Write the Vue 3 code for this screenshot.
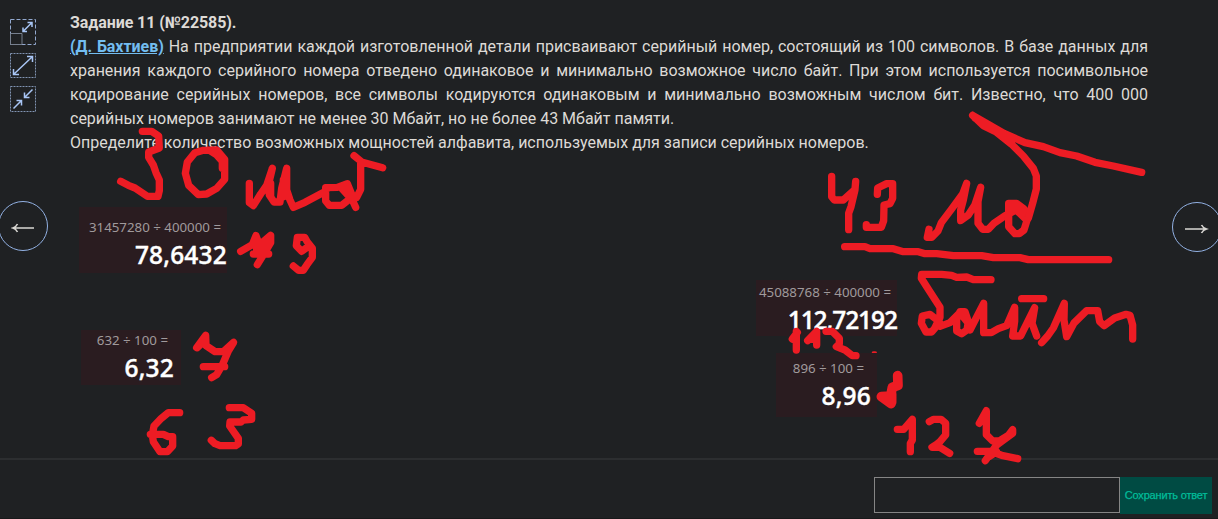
<script setup>
const calcs = [
  { id: 'a', expr: '31457280 ÷ 400000 =', value: '78,6432' },
  { id: 'b', expr: '632 ÷ 100 =', value: '6,32' },
  { id: 'c', expr: '45088768 ÷ 400000 =', value: '112,72192' },
  { id: 'd', expr: '896 ÷ 100 =', value: '8,96' },
]
</script>

<template>
  <div class="page">
    <main class="main">
      <aside class="tools">
        <svg width="26" height="26" viewBox="0 0 26 26">
          <rect class="dash big" x=".5" y=".5" width="25" height="25" />
          <path class="dim" d="M.5 14.5H12V25.5H.5Z" />
          <path class="line" d="M13.5 12 21.5 4M17.5 3.5H22V8M13 8.5V12.5H17" />
        </svg>
        <svg width="26" height="25" viewBox="0 0 26 25">
          <rect class="dash" x=".5" y=".5" width="25" height="24" />
          <path class="line" d="M4 21 22 4M17 3.5H22.5V9M3.5 16V21.5H9" />
        </svg>
        <svg width="26" height="26" viewBox="0 0 26 26">
          <rect class="dash" x=".5" y=".5" width="25" height="25" />
          <path class="line" d="M3.5 22.5 11 15M6.5 14.5H11.5V19.5M22.5 3.5 15 11M14.5 6.5V11.5H19.5" />
        </svg>
      </aside>
      <article class="task">
        <h1>Задание 11 (№22585).</h1>
        <p><a>(Д. Бахтиев)</a> На предприятии каждой изготовленной детали присваивают серийный номер, состоящий из 100 символов. В базе данных для хранения каждого серийного номера отведено одинаковое и минимально возможное число байт. При этом используется посимвольное кодирование серийных номеров, все символы кодируются одинаковым и минимально возможным числом бит. Известно, что 400 000 серийных номеров занимают не менее 30 Мбайт, но не более 43 Мбайт памяти.</p>
        <p>Определите количество возможных мощностей алфавита, используемых для записи серийных номеров.</p>
      </article>
    </main>

    <footer class="answer">
      <input class="field" type="text" />
      <button class="save">Сохранить ответ</button>
    </footer>

    <button class="nav prev">
      <svg width="24" height="12" viewBox="0 0 24 12"><path d="M2 6H23M6.500 2Q5 5 2 6Q5 7 6.500 10" /></svg>
    </button>
    <button class="nav next">
      <svg width="24" height="12" viewBox="0 0 24 12"><path d="M0 6H21M16.500 2Q18 5 21.500 6Q18 7 16.500 10" /></svg>
    </button>

    <div v-for="c in calcs" :key="c.id" class="calc" :class="c.id">
      <span class="expr">{{ c.expr }}</span>
      <strong>{{ c.value }}</strong>
    </div>

    <svg class="ink" width="1218" height="519" viewBox="0 0 1218 519">
      <g transform="translate(0 120) scale(.33333)">
        <path d="M427 34H455L476 48 478 84 446 96 446 112 460 135 468 158 478 180V212L474 229H442L405 204 385 196 362 184" />
        <path d="M610 91 585 98 562 126 556 160 566 196 595 224 620 222 650 205 674 178V118L650 90ZM640 94 667 124V145M630 92 662 112" />
        <path d="M748 190V248L760 257 782 222 800 196 817 145 806 192 808 225 822 246 840 246 845 205 860 145 860 210 870 240 880 262 915 247 977 214M977 203V243L988 256H1025L1058 230 1042 191 1012 202 978 203M1025 205 1057 240 1067 262M1070 232 1082 208V123L1062 107M1082 125 1148 143M812 190V230M850 180V230" />
        <path d="M722 394 757 374 768 347 778 375 812 346 812 368 790 405 772 434M760 402H806M765 378 795 398M775 388 800 362M770 380V395" />
        <path d="M922 382 905 394 889 377 892 352H914L922 366 937 385V412L921 434 910 451H896L880 438" />
      </g>
      <g transform="translate(60 300) scale(.33333)">
        <path d="M410 143 427 120 437 106 438 137 465 155H490L521 127 505 153 487 195 470 224 455 233M430 200H494M412 143 437 119" />
        <path d="M359 338H325L304 355 282 378 277 405 280 425 300 455H322L338 438V410H325L310 403H271" />
        <path d="M508 323H550L575 340V358L550 360 543 366 510 366 509 378 535 415V432L527 437H480L465 431 454 421" />
      </g>
      <g transform="translate(740 100) scale(.33333)">
        <path d="M275 229V290L283 300H310L345 268 347 244M345 270 333 320 326 340V389" />
        <path d="M412 283 413 264 440 251H458V295L450 311 432 315 431 362 424 382H379L379 374" />
        <path d="M567 388 562 412H575L594 393 604 368 634 328 668 282 680 250 670 300 662 330V362L685 345 704 316 722 262 714 305V370L728 388H745L762 370 795 347 828 330" />
        <path d="M806 340V310H830L850 325 866 345 852 390 838 401H825L806 380V320ZM824 325 855 355" />
        <path d="M698 46 730 77 767 95 814 132 850 168 880 205 889 228V267L878 310 865 355M698 46 740 70 792 100 855 128 910 140 960 158 1010 168 1065 187 1120 198 1205 217M706 55 820 118" />
        <path d="M314 440H375L390 446H460L490 455H535L555 461H590L640 467H725L760 473H840L865 479H1106" />
      </g>
      <g transform="translate(740 260) scale(.33333)">
        <path d="M753 59H700L680 51 650 52 635 46 605 43H545L544 55 565 88 600 142V172L584 205 575 216H558L544 190 547 168 570 163 598 185 600 199 630 188 660 158M660 155H675L685 185 681 210 665 221 650 213V178ZM665 165 685 190 690 210 731 130V218H754L775 206 800 197 824 142 824 184 818 228H842L884 143 876 190 890 228" />
        <path d="M845 116H911M905 248 923 228 940 204 973 130 972 180 980 230 1002 189 1040 152H1073L1079 185 1092 197 1124 174 1158 163 1170 166 1178 195V237" />
        <path d="M169 214V270M157 237 172 217M203 242 230 214V255M210 238H228M258 214H277L298 235V252L289 260 315 270 337 287H348" />
        <path stroke-width="12" d="M401 279H405" clip-path="url(#dot)" />
        <path class="bold" d="M473 347 474 376 457 382 452 408 424 410 453 431M455 402V427" />
        <path d="M472 508H491L517 478V540L511 550V575" />
        <path d="M568 485 580 478H603L617 490V525L600 545 590 553 576 562H600L629 580" />
        <path d="M718 490 739 452V524L758 543H777L806 525 818 509V520L770 555 736 602M712 574H750L785 586 833 596M747 590 770 575" />
      </g>
      <defs><clipPath id="dot"><rect x="390" y="274" width="25" height="5" /></clipPath></defs>
    </svg>
  </div>
</template>

<style>
body { margin: 0; background: #1f2123; }
</style>

<style scoped>
.page { position: relative; width: 1218px; height: 519px; overflow: hidden; background: #1f2123; display: flex; flex-direction: column; font-family: Roboto, sans-serif; box-sizing: border-box; border-bottom: 1px solid #18191a; }
.main { display: flex; box-sizing: border-box; height: 460px; border-bottom: 2px solid #2c2e30; padding: 11px 70px 0 10px; }
.tools { width: 60px; display: flex; flex-direction: column; gap: 8px; padding-top: 8px; box-sizing: border-box; }
.tools svg { fill: none; }
.dash { stroke: #8194b3; stroke-dasharray: 2 1; }
.dash.big { stroke: #93a9cf; stroke-dasharray: 4 2; }
.dim { stroke: #77808f; }
.line { stroke: #a9c6f5; stroke-width: 1.5; }
.task { width: 1078px; color: #dddad6; font-size: 16px; line-height: 24px; }
h1 { margin: 0; font-size: 16px; font-weight: 700; line-height: 24px; letter-spacing: -.09px; }
p { margin: 0; text-align: justify; }
a { font-weight: 700; color: #73bdf0; text-decoration: underline; letter-spacing: -.05px; }
.answer { display: flex; justify-content: flex-end; align-items: flex-start; padding: 17px 6px 0 0; }
.field { box-sizing: border-box; width: 246px; height: 36px; margin: 0; padding: 0 8px; border: 1px solid #858585; background: #1f2123; color: #ddd; outline: none; }
.save { width: 92px; height: 37px; border: 0; padding: 0 0 2px; background: #004b43; color: #00bc9a; font: 400 11px "Liberation Sans", sans-serif; letter-spacing: -.17px; white-space: nowrap; -webkit-text-stroke: .25px #00bc9a; }
.nav { position: absolute; width: 50px; height: 50px; padding: 3px 0 0; border: 1px solid #92b1e3; border-radius: 50%; background: transparent; display: flex; align-items: center; justify-content: center; box-sizing: border-box; }
.prev { left: -2px; top: 201px; }
.next { left: 1172px; top: 202px; }
.nav path { fill: none; stroke: #d9d7d3; stroke-width: 1.6; }
.calc { position: absolute; box-sizing: border-box; background: #2a1c20; font-family: "Noto Sans", sans-serif; display: flex; flex-direction: column; align-items: flex-end; white-space: nowrap; }
.expr { color: #a09a9c; font-size: 13.3px; line-height: 18px; }
.calc strong { color: #fff; font-family: "Open Sans", sans-serif; font-size: 24.5px; font-weight: 600; line-height: 32px; margin-top: 3px; letter-spacing: .2px; -webkit-text-stroke: .3px #fff; }
.a { left: 79px; top: 207px; width: 148px; height: 66px; padding-top: 11px; }
.a .expr { margin-right: 6px; }
.b { left: 81px; top: 330px; width: 100px; height: 55px; padding: 1px 7px 0 0; }
.b .expr { margin-right: 6px; }
.c { left: 756px; top: 280px; width: 141px; height: 56px; padding-top: 3px; }
.c .expr { margin-right: 6px; }
.c strong { letter-spacing: -1.05px; margin-right: 0; }
.d { left: 776px; top: 353px; width: 101px; height: 64px; padding: 6px 6px 0 0; }
.d .expr { margin-right: 7px; }
.ink { position: absolute; left: 0; top: 0; pointer-events: none; fill: none; stroke: #ed1c24; stroke-width: 22; stroke-linecap: round; stroke-linejoin: round; }
.bold { stroke-width: 29; }
</style>
